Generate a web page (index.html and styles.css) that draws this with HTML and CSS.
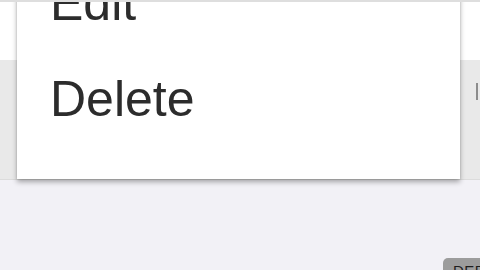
FILE: index.html
```html
<!DOCTYPE html>
<html>
<head>
<meta charset="utf-8">
<link rel="stylesheet" href="styles.css">
</head>
<body>
<div class="screen">
  <div class="topline"></div>
  <div class="list">
    <div class="cell cell-white"></div>
    <div class="cell cell-gray"><span class="trail"></span></div>
  </div>
  <div class="menu">
    <div class="menu-item">Edit</div>
    <div class="menu-item">Delete</div>
  </div>
  <div class="badge"><span class="dot"></span><span class="badge-text">DEBUG</span></div>
</div>
</body>
</html>
```
FILE: styles.css
```css
html, body {
  margin: 0;
  padding: 0;
}
body {
  background: #f2f1f6;
  font-family: "Liberation Sans", Arial, sans-serif;
  overflow: hidden;
}
.screen {
  position: relative;
  width: 480px;
  height: 270px;
  overflow: hidden;
  background: #f2f1f6;
}
.topline {
  position: absolute;
  left: 0;
  top: 0;
  width: 100%;
  height: 2px;
  background: #dedede;
  z-index: 3;
}
.list {
  display: flex;
  flex-direction: column;
  padding-top: 2px;
}
.cell-white {
  height: 58px;
  background: #ffffff;
}
.cell-gray {
  background: #e9e9e9;
  border-bottom: 1px solid #dcdcdc;
  display: flex;
  justify-content: flex-end;
  padding-top: 23px;
  box-sizing: border-box;
  height: 120px;
}
.trail {
  display: block;
  width: 2px;
  height: 17px;
  background: #8c8c8c;
  margin-right: 2px;
}
.menu {
  position: absolute;
  left: 17px;
  top: -53px;
  width: 443px;
  padding: 8px 0 32px;
  background: #ffffff;
  box-shadow: 0 3px 5px rgba(0, 0, 0, 0.32), 0 0 2px rgba(0, 0, 0, 0.12);
  z-index: 2;
}
.menu-item {
  height: 96px;
  display: flex;
  align-items: center;
  padding-left: 33px;
  font-size: 50px;
  line-height: 56px;
  color: #2c2c2c;
}
.badge {
  position: absolute;
  left: 443px;
  top: 258px;
  width: 60px;
  height: 20px;
  background: #9c9c9c;
  border-top-left-radius: 5px;
  display: flex;
  align-items: flex-start;
  padding: 5px 0 0 3px;
  box-sizing: border-box;
  z-index: 4;
}
.dot {
  flex: none;
  width: 4px;
  height: 4px;
  border-radius: 50%;
  background: #d0303a;
  margin-top: 7px;
  margin-right: 3px;
}
.badge-text {
  font-size: 15px;
  line-height: 15px;
  color: #1e1e1e;
  letter-spacing: 0.5px;
}
```
